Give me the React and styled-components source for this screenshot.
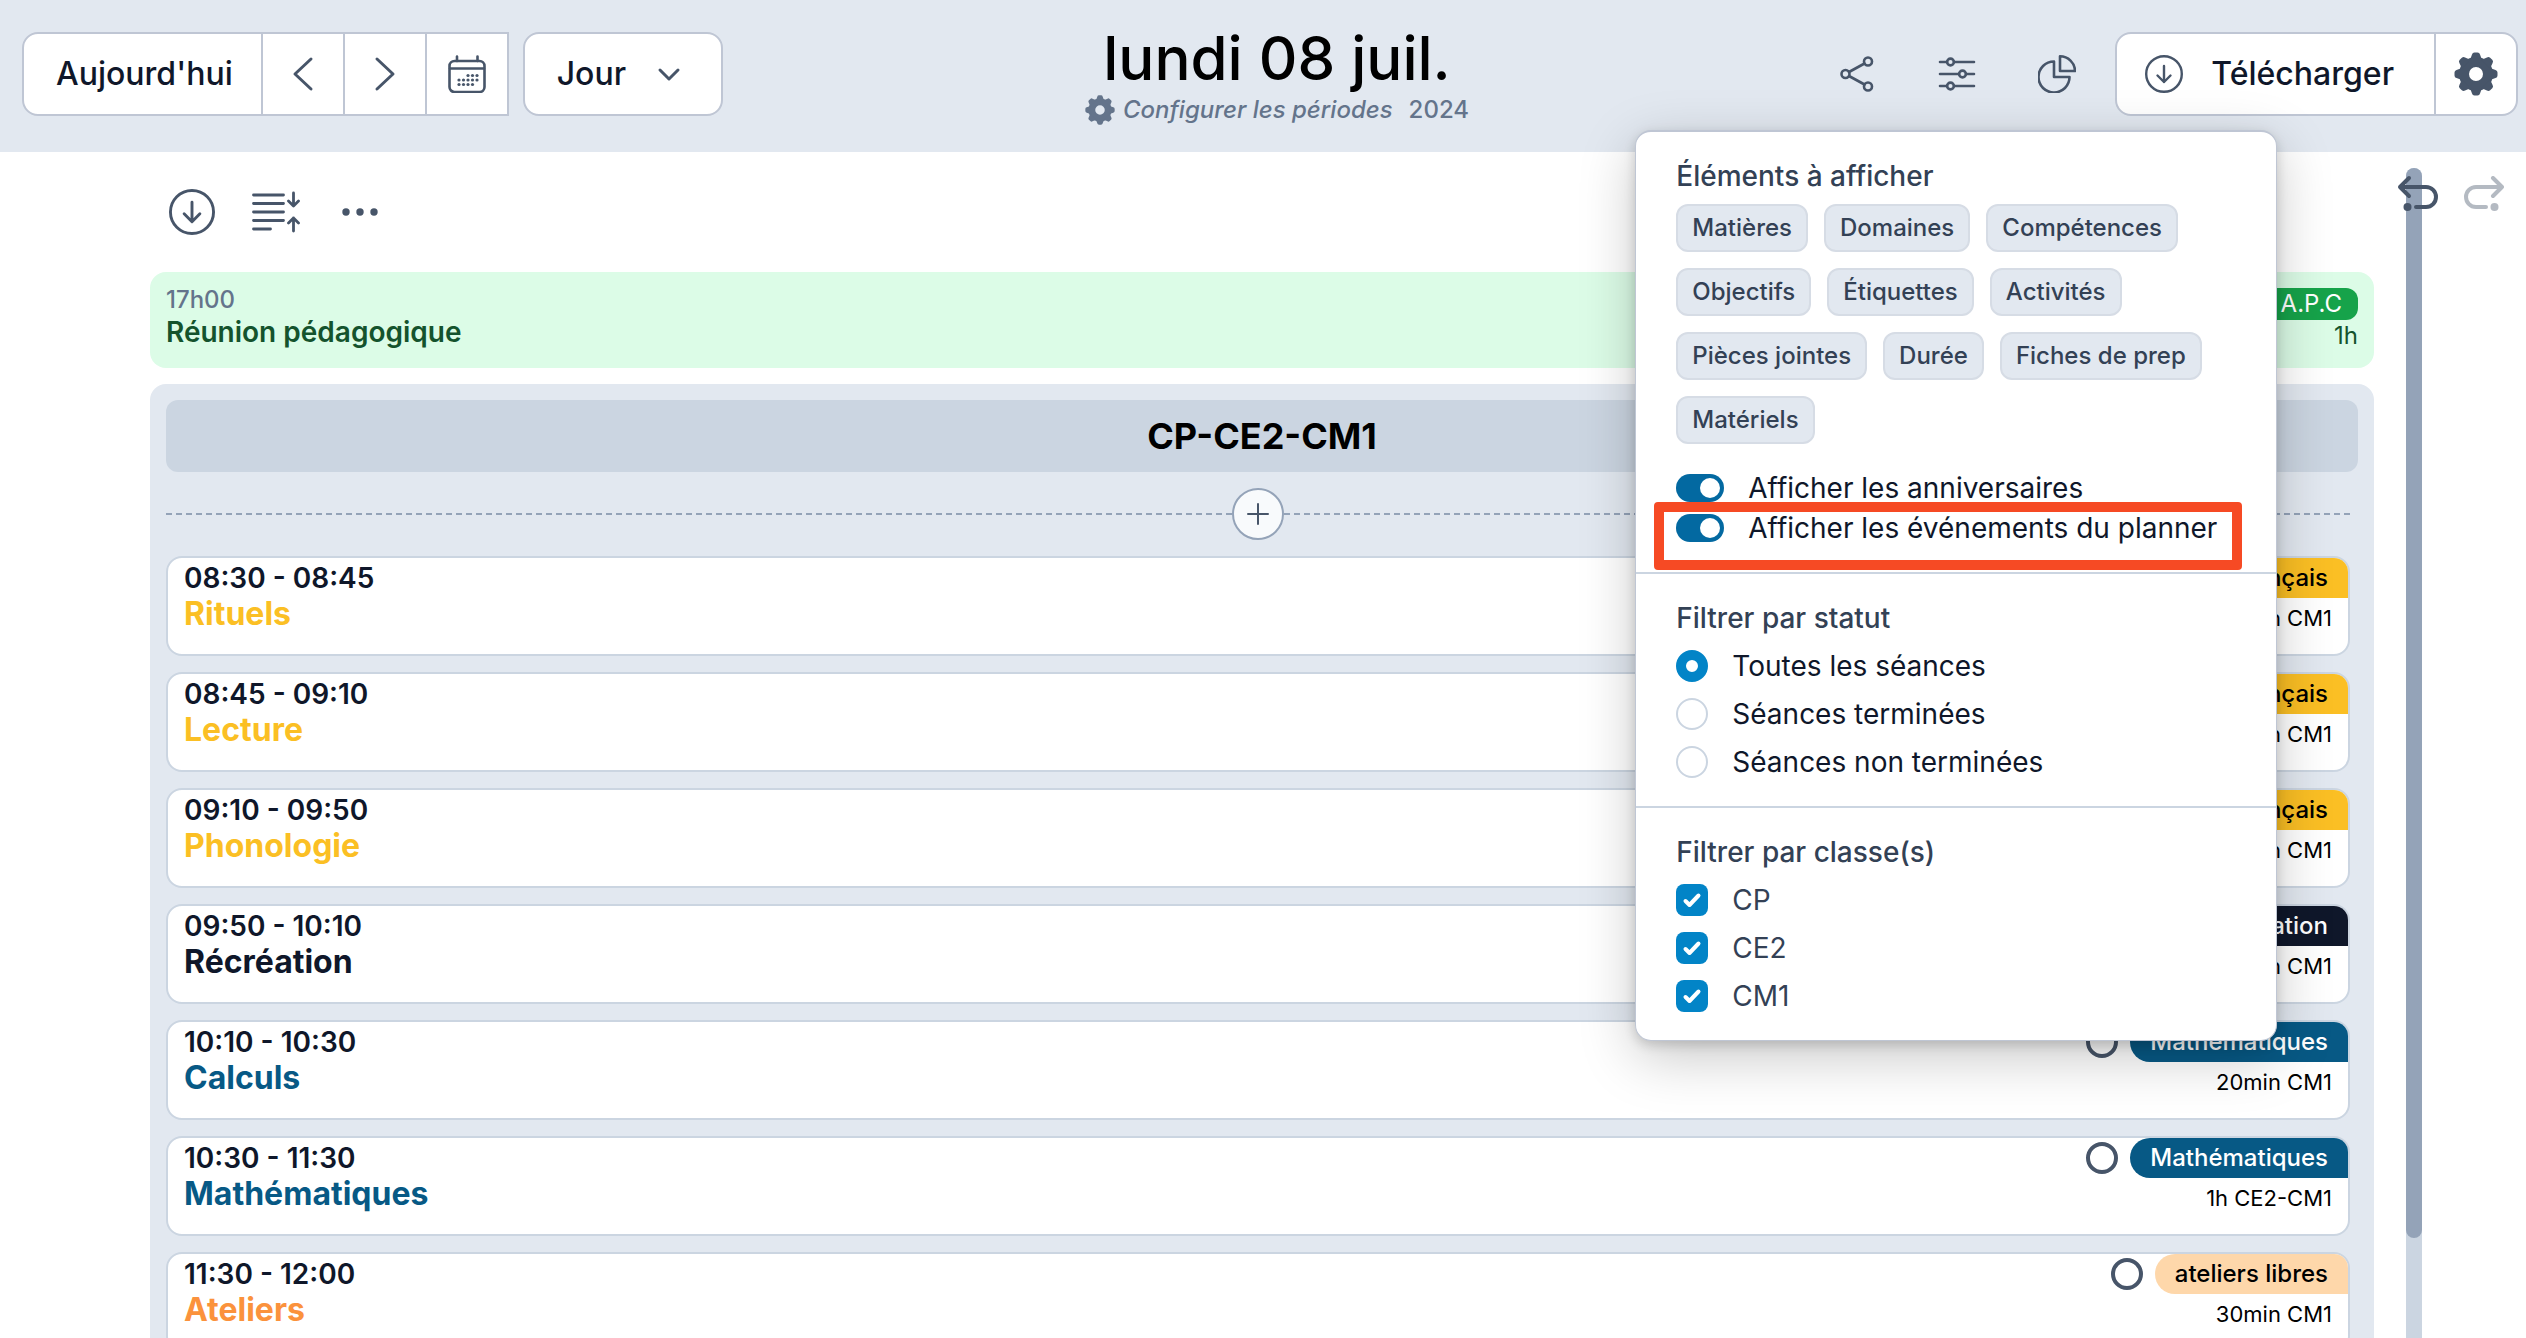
import React, { useState } from 'react'
import styled, { createGlobalStyle } from 'styled-components';

const colors = {
      border: "#bfc6d4",
      line: "#cbd5e1",
      panel: "#e2e8f0",
      icon: "#475569",
      muted: "#64748b",
      heading: "#334155",
      text: "#0f172a",
};

const sessions = [
      { id: 1, time: "08:30 - 08:45", title: "Rituels", color: "#fbbf24", tag: "Français", tagBg: "#fbbf24", tagColor: "#000", meta: "15min CM1" },
      { id: 2, time: "08:45 - 09:10", title: "Lecture", color: "#fbbf24", tag: "Français", tagBg: "#fbbf24", tagColor: "#000", meta: "25min CM1" },
      { id: 3, time: "09:10 - 09:50", title: "Phonologie", color: "#fbbf24", tag: "Français", tagBg: "#fbbf24", tagColor: "#000", meta: "40min CM1" },
      { id: 4, time: "09:50 - 10:10", title: "Récréation", color: "#0f172a", tag: "Récréation", tagBg: "#0f172a", tagColor: "#fff", meta: "20min CM1" },
      { id: 5, time: "10:10 - 10:30", title: "Calculs", color: "#075985", tag: "Mathématiques", tagBg: "#075985", tagColor: "#fff", meta: "20min CM1" },
      { id: 6, time: "10:30 - 11:30", title: "Mathématiques", color: "#075985", tag: "Mathématiques", tagBg: "#075985", tagColor: "#fff", meta: "1h CE2-CM1" },
      { id: 7, time: "11:30 - 12:00", title: "Ateliers", color: "#fb923c", tag: "ateliers libres", tagBg: "#fed7aa", tagColor: "#000", meta: "30min CM1" },
];

const elements = ["Matières", "Domaines", "Compétences", "Objectifs", "Étiquettes", "Activités", "Pièces jointes", "Durée", "Fiches de prep", "Matériels"];
const statuses = ["Toutes les séances", "Séances terminées", "Séances non terminées"];
const classes = ["CP", "CE2", "CM1"];

const GlobalStyle = createGlobalStyle`
* {
      box-sizing: border-box;
}
body {
      margin: 0;
      background: #fff;
      font-family: Inter, "Liberation Sans", sans-serif;
      font-size: 28px;
      line-height: 40px;
      color: ${colors.text};
}
button, select, input {
      margin: 0;
      font: inherit;
      color: inherit;
}
button, select, label {
      cursor: pointer;
}
svg {
      display: block;
      flex: none;
}
`;

const Page = styled.div`
height: 100vh;
display: flex;
flex-direction: column;
overflow: hidden;
`;

const Header = styled.header`
display: flex;
align-items: center;
justify-content: space-between;
padding: 22px 8px 26px 22px;
background: ${colors.panel};
`;

const HeaderGroup = styled.div`
display: flex;
align-items: center;
gap: ${(props) => props.$gap}px;
`;

const ButtonGroup = styled.div`
display: flex;
height: 84px;
background: #fff;
border: 2px solid ${colors.border};
border-radius: ${(props) => props.$open ? "16px 0 0 16px" : "16px"};
`;

const GroupButton = styled.button`
display: flex;
align-items: center;
justify-content: center;
gap: 28px;
min-width: 82px;
padding: ${(props) => props.$padding || "0"};
background: none;
border: 0;
font-size: 32px;
font-weight: 500;
color: ${colors.text};

& + & {
      border-left: 2px solid ${colors.border};
}

svg {
      color: ${colors.icon};
}
`;

const SelectBox = styled.div`
display: grid;
align-items: center;
height: 84px;
background: #fff;
border: 2px solid ${colors.border};
border-radius: 16px;

> * {
      grid-area: 1 / 1;
}

svg {
      justify-self: end;
      margin-right: 40px;
      color: ${colors.icon};
      pointer-events: none;
}
`;

const Select = styled.select`
appearance: none;
height: 100%;
padding: 0 94px 0 32px;
background: none;
border: 0;
font-size: 32px;
font-weight: 500;
`;

const TitleBlock = styled.div`
display: flex;
flex-direction: column;
align-items: center;
`;

const DayTitle = styled.h1`
margin: 0;
font-size: 60px;
font-weight: 500;
line-height: 72px;
color: #000;
`;

const Period = styled.div`
display: flex;
align-items: center;
gap: 16px;
font-size: 24px;
font-weight: 500;
line-height: 32px;
color: ${colors.muted};
`;

const PeriodButton = styled.button`
display: flex;
align-items: center;
gap: 8px;
padding: 0;
background: none;
border: 0;
font-style: italic;
`;

const HeaderIcons = styled.div`
display: flex;
gap: 48px;
`;

const IconButton = styled.button`
display: flex;
align-items: center;
justify-content: center;
min-width: ${(props) => props.$size || 48}px;
height: ${(props) => props.$size || 48}px;
padding: 0;
background: none;
border: 0;
color: ${colors.icon};

&:disabled {
      opacity: 0.4;
}
`;

const Anchor = styled.div`
position: relative;
`;

const Popover = styled.div`
position: absolute;
z-index: 10;
top: 82px;
right: -294px;
width: 642px;
background: #fff;
border: 2px solid ${colors.border};
border-width: 2px 1px 1px;
border-radius: 16px;
box-shadow: 0 16px 56px rgba(0, 0, 0, 0.22), 0 4px 12px rgba(0, 0, 0, 0.16);
`;

const Section = styled.section`
padding: 24px 40px 20px;

& + & {
      border-top: 2px solid ${colors.line};
}
`;

const SectionTitle = styled.h2`
margin: 0 0 4px;
font-size: 28px;
font-weight: 500;
line-height: 40px;
color: ${colors.heading};
`;

const Chips = styled.div`
display: flex;
flex-wrap: wrap;
gap: 16px;
padding: 4px 0 24px;
`;

const Chip = styled.button`
height: 48px;
padding: 0 14px;
background: ${colors.panel};
border: 2px solid #d6dce5;
border-radius: 12px;
font-size: 24px;
font-weight: 500;
line-height: 32px;
color: ${colors.heading};
`;

const ToggleRow = styled.label`
position: relative;
display: flex;
align-items: center;
gap: 24px;
height: 40px;
white-space: nowrap;

&:last-child {
      margin-bottom: 4px;
}

&:last-child::after {
      content: "";
      position: absolute;
      inset: -6px -6px -22px -22px;
      border: 10px solid #f64a24;
      border-radius: 4px;
      pointer-events: none;
}
`;

const Toggle = styled.input`
appearance: none;
display: flex;
width: 48px;
height: 28px;
padding: 4px;
background: ${colors.line};
border-radius: 14px;

&::before {
      content: "";
      width: 20px;
      height: 20px;
      background: #fff;
      border-radius: 50%;
}

&:checked {
      justify-content: flex-end;
      background: #0369a1;
}
`;

const OptionRow = styled.label`
display: flex;
align-items: center;
gap: 24px;
height: 48px;
color: ${(props) => props.$muted ? colors.heading : colors.text};
`;

const Radio = styled.input`
appearance: none;
width: 32px;
height: 32px;
background: #fff;
border: 2px solid ${colors.line};
border-radius: 50%;

&:checked {
      border: 10px solid #0284c7;
}
`;

const CheckBox = styled.span`
display: grid;
color: #fff;

> * {
      grid-area: 1 / 1;
}

svg {
      pointer-events: none;
}
`;

const CheckInput = styled.input`
appearance: none;
width: 32px;
height: 32px;
border: 2px solid ${colors.line};
border-radius: 8px;

&:checked {
      background: #0284c7;
      border: 0;
}
`;

const Body = styled.div`
position: relative;
flex: 1;
min-height: 0;
display: flex;
gap: 32px;
padding: 0 104px 0 150px;
`;

const History = styled.div`
position: absolute;
top: 20px;
right: 20px;
display: flex;
gap: 22px;
`;

const Content = styled.main`
flex: 1;
min-width: 0;
`;

const Scrollbar = styled.div`
width: 16px;
margin-top: 16px;
background: ${colors.line};
border-radius: 8px 8px 0 0;
`;

const Thumb = styled.div`
height: 1070px;
background: #94a3b8;
border-radius: 8px;
`;

const Toolbar = styled.div`
display: flex;
align-items: center;
gap: 36px;
height: 120px;
padding-left: 18px;
`;

const EventCard = styled.article`
display: flex;
justify-content: space-between;
height: 96px;
margin-bottom: 16px;
padding: 12px 16px;
background: #dcfce7;
border-radius: 16px;
font-size: 24px;
line-height: 32px;
color: #14532d;
`;

const EventTime = styled.div`
font-weight: 500;
color: ${colors.muted};
`;

const EventTitle = styled.div`
font-size: 28px;
font-weight: 600;
`;

const EventSide = styled.div`
padding-top: 4px;
text-align: right;
`;

const EventTag = styled.div`
padding: 0 16px;
background: #16a34a;
border-radius: 12px;
color: #fff;
`;

const DayPanel = styled.div`
padding: 16px 16px 0;
background: ${colors.panel};
border-radius: 16px 16px 0 0;
`;

const ClassTitle = styled.h2`
margin: 0;
padding: 8px;
background: ${colors.line};
border-radius: 12px;
font-size: 36px;
font-weight: 700;
line-height: 56px;
text-align: center;
color: #000;
`;

const SessionList = styled.div`
display: flex;
flex-direction: column;
gap: 16px;
padding: 16px 8px 0 0;
`;

const AddRow = styled.div`
display: flex;
align-items: center;
height: 52px;

&::before, &::after {
      content: "";
      flex: 1;
      border-top: 2px dashed #94a3b8;
}
`;

const AddButton = styled.button`
display: flex;
align-items: center;
justify-content: center;
width: 52px;
height: 52px;
padding: 0;
background: #f8fafc;
border: 2px solid #94a3b8;
border-radius: 50%;
color: ${colors.icon};
`;

const SessionCard = styled.article`
display: flex;
flex: none;
justify-content: space-between;
height: 100px;
overflow: hidden;
background: #fff;
border: 2px solid ${colors.line};
border-radius: 16px;
`;

const SessionMain = styled.div`
padding-left: 16px;
`;

const SessionTime = styled.div`
font-weight: 600;
`;

const SessionTitle = styled.div`
font-size: 32px;
font-weight: 700;
line-height: 32px;
color: ${(props) => props.$color};
`;

const SessionSide = styled.div`
text-align: right;
color: #000;
`;

const TagRow = styled.div`
display: flex;
align-items: center;
justify-content: flex-end;
gap: 12px;
`;

const DoneInput = styled.input`
appearance: none;
width: 32px;
height: 32px;
border: 4px solid ${colors.icon};
border-radius: 50%;
`;

const Tag = styled.span`
padding: 0 20px;
background: ${(props) => props.$bg};
border-radius: 20px 0 0 20px;
font-size: 24px;
font-weight: 500;
color: ${(props) => props.$color};
`;

const Meta = styled.div`
padding-right: 16px;
font-size: 22px;
`;

const Icon = ({ w = 38, h = 38, box, stroke = 2, children }) => (
      <svg width={w} height={h} viewBox={box || `0 0 ${w} ${h}`} fill="none" stroke="currentColor" strokeWidth={stroke} strokeLinecap="round" strokeLinejoin="round" aria-hidden="true">
            {children}
      </svg>
);

const GearIcon = ({ size }) => (
      <svg width={size} height={size} viewBox="0 0 44 44" aria-hidden="true">
            <circle cx="22" cy="22" r="12" fill="none" stroke="currentColor" strokeWidth="10" />
            {[0, 45, 90, 135, 180, 225, 270, 315].map(angle => (
                  <path key={angle} d="M16 8 L18 2.5 Q18.5 0.5 20.5 0.5 H23.5 Q25.5 0.5 26 2.5 L28 8 Z" fill="currentColor" transform={`rotate(${angle} 22 22)`} />
            ))}
      </svg>
);

const DownloadIcon = ({ size, stroke }) => (
      <Icon w={size} h={size} box="0 0 38 38" stroke={stroke}>
            <circle cx="19" cy="19" r="17.8" />
            <path d="M19 11 V27 M12.5 20.5 L19 27 L25.5 20.5" />
      </Icon>
);

const CalendarIcon = () => (
      <Icon stroke={2.6}>
            <rect x="1.5" y="6" width="35" height="31" rx="5" />
            <path d="M2 13.5 H36 M9 1.5 V6 M29.5 1.5 V6" />
            <g fill="currentColor" stroke="none">
                  {[[20, 20.5], [24.5, 20.5], [29, 20.5], [11, 25], [15.5, 25], [20, 25], [24.5, 25], [29, 25], [11, 29.5], [15.5, 29.5], [20, 29.5], [24.5, 29.5]].map(([x, y]) => (
                        <circle key={`${x}-${y}`} cx={x} cy={y} r="1.6" />
                  ))}
            </g>
      </Icon>
);

const UndoShape = () => (
      <>
            <path d="M12 3 L3 12 L12 21 M3 12 H29 A9.5 9.5 0 0 1 29 32 H19" />
            <circle cx="10.5" cy="32" r="4" fill="currentColor" stroke="none" />
      </>
);

const FilterPopover = () => {
      const [birthdays, setBirthdays] = useState(true);
      const [events, setEvents] = useState(true);
      const [status, setStatus] = useState(0);
      const [checked, setChecked] = useState(classes);

      const toggleClass = (name) => {
            setChecked(checked.includes(name) ? checked.filter(c => c !== name) : [...checked, name]);
      };

      return (
            <Popover>
                  <Section>
                        <SectionTitle>Éléments à afficher</SectionTitle>
                        <Chips>
                              {elements.map(name => <Chip key={name}>{name}</Chip>)}
                        </Chips>
                        <ToggleRow>
                              <Toggle type="checkbox" checked={birthdays} onChange={() => setBirthdays(!birthdays)} />
                              Afficher les anniversaires
                        </ToggleRow>
                        <ToggleRow>
                              <Toggle type="checkbox" checked={events} onChange={() => setEvents(!events)} />
                              Afficher les événements du planner
                        </ToggleRow>
                  </Section>
                  <Section>
                        <SectionTitle>Filtrer par statut</SectionTitle>
                        {statuses.map((label, index) => (
                              <OptionRow key={label}>
                                    <Radio type="radio" name="status" checked={status === index} onChange={() => setStatus(index)} />
                                    {label}
                              </OptionRow>
                        ))}
                  </Section>
                  <Section>
                        <SectionTitle>Filtrer par classe(s)</SectionTitle>
                        {classes.map(name => (
                              <OptionRow key={name} $muted>
                                    <CheckBox>
                                          <CheckInput type="checkbox" checked={checked.includes(name)} onChange={() => toggleClass(name)} />
                                          <Icon w={32} h={32} stroke={4}>
                                                <path d="M9.5 17 L13.5 21 L22.5 11.5" />
                                          </Icon>
                                    </CheckBox>
                                    {name}
                              </OptionRow>
                        ))}
                  </Section>
            </Popover>
      )
}

const App = () => {
      const [view, setView] = useState("Jour");
      const [open, setOpen] = useState(true);

      return (
            <Page>
                  <GlobalStyle />
                  <Header>
                        <HeaderGroup $gap={14}>
                              <ButtonGroup $open>
                                    <GroupButton $padding="0 28px 0 32px">Aujourd'hui</GroupButton>
                                    <GroupButton aria-label="Jour précédent">
                                          <Icon stroke={3}><path d="M27 4 L11 19 L27 34" /></Icon>
                                    </GroupButton>
                                    <GroupButton aria-label="Jour suivant">
                                          <Icon stroke={3}><path d="M11 4 L27 19 L11 34" /></Icon>
                                    </GroupButton>
                                    <GroupButton aria-label="Calendrier"><CalendarIcon /></GroupButton>
                              </ButtonGroup>
                              <SelectBox>
                                    <Select aria-label="Vue" value={view} onChange={(e) => setView(e.target.value)}>
                                          <option>Jour</option>
                                    </Select>
                                    <Icon w={24} h={24} stroke={3}><path d="M3 8 L12 17 L21 8" /></Icon>
                              </SelectBox>
                        </HeaderGroup>
                        <TitleBlock>
                              <DayTitle>lundi 08 juil.</DayTitle>
                              <Period>
                                    <PeriodButton>
                                          <GearIcon size={30} />
                                          Configurer les périodes
                                    </PeriodButton>
                                    <span>2024</span>
                              </Period>
                        </TitleBlock>
                        <HeaderGroup $gap={32}>
                              <HeaderIcons>
                                    <IconButton $size={52} aria-label="Partager">
                                          <Icon stroke={2.6}>
                                                <circle cx="7.5" cy="19" r="4" />
                                                <circle cx="30" cy="6.5" r="4" />
                                                <circle cx="30" cy="31.5" r="4" />
                                                <path d="M11 17 L26.5 8.5 M11 21 L26.5 29.5" />
                                          </Icon>
                                    </IconButton>
                                    <Anchor>
                                          <IconButton $size={52} aria-label="Filtres" onClick={() => setOpen(!open)}>
                                                <Icon stroke={2.6}>
                                                      <path d="M2 7 H9 M16 7 H36 M2 19 H21 M28 19 H36 M2 31 H9 M16 31 H36" />
                                                      <circle cx="12.5" cy="7" r="3.4" />
                                                      <circle cx="24.5" cy="19" r="3.4" />
                                                      <circle cx="12.5" cy="31" r="3.4" />
                                                </Icon>
                                          </IconButton>
                                          {open && <FilterPopover />}
                                    </Anchor>
                                    <IconButton $size={52} aria-label="Statistiques">
                                          <Icon stroke={2.6}>
                                                <path d="M16 6.5 A15.5 15.5 0 1 0 31.5 22 H16 Z" />
                                                <path d="M22 16 H37 A15 15 0 0 0 22 1.3 Z" />
                                          </Icon>
                                    </IconButton>
                              </HeaderIcons>
                              <ButtonGroup>
                                    <GroupButton $padding="0 40px 0 28px">
                                          <DownloadIcon size={38} stroke={2.4} />
                                          Télécharger
                                    </GroupButton>
                                    <GroupButton aria-label="Paramètres"><GearIcon size={44} /></GroupButton>
                              </ButtonGroup>
                        </HeaderGroup>
                  </Header>
                  <Body>
                        <Content>
                              <Toolbar>
                                    <IconButton aria-label="Télécharger la journée"><DownloadIcon size={46} stroke={2.4} /></IconButton>
                                    <IconButton aria-label="Réduire">
                                          <Icon w={48} h={48} stroke={2.8}>
                                                <path d="M1.5 7 H31.5 M1.5 15.5 H31.5 M1.5 24 H31.5 M1.5 32.5 H31.5 M1.5 41 H18.5" />
                                                <path d="M41.5 5 V18 M36.5 13 L41.5 18 L46.5 13 M41.5 43 V30 M36.5 35 L41.5 30 L46.5 35" />
                                          </Icon>
                                    </IconButton>
                                    <IconButton aria-label="Plus d'options">
                                          <svg width="48" height="48" viewBox="0 0 48 48" fill="currentColor" aria-hidden="true">
                                                <circle cx="10" cy="24" r="3.7" />
                                                <circle cx="24" cy="24" r="3.7" />
                                                <circle cx="38" cy="24" r="3.7" />
                                          </svg>
                                    </IconButton>
                              </Toolbar>
                              <EventCard>
                                    <div>
                                          <EventTime>17h00</EventTime>
                                          <EventTitle>Réunion pédagogique</EventTitle>
                                    </div>
                                    <EventSide>
                                          <EventTag>A.P.C</EventTag>
                                          <div>1h</div>
                                    </EventSide>
                              </EventCard>
                              <DayPanel>
                                    <ClassTitle>CP-CE2-CM1</ClassTitle>
                                    <SessionList>
                                          <AddRow>
                                                <AddButton aria-label="Ajouter une séance">
                                                      <Icon w={22} h={22}><path d="M11 1 V21 M1 11 H21" /></Icon>
                                                </AddButton>
                                          </AddRow>
                                          {sessions.map(session => (
                                                <SessionCard key={session.id}>
                                                      <SessionMain>
                                                            <SessionTime>{session.time}</SessionTime>
                                                            <SessionTitle $color={session.color}>{session.title}</SessionTitle>
                                                      </SessionMain>
                                                      <SessionSide>
                                                            <TagRow>
                                                                  <DoneInput type="checkbox" aria-label={`${session.title} terminée`} />
                                                                  <Tag $bg={session.tagBg} $color={session.tagColor}>{session.tag}</Tag>
                                                            </TagRow>
                                                            <Meta>{session.meta}</Meta>
                                                      </SessionSide>
                                                </SessionCard>
                                          ))}
                                    </SessionList>
                              </DayPanel>
                        </Content>
                        <Scrollbar>
                              <Thumb />
                        </Scrollbar>
                        <History>
                              <IconButton $size={44} aria-label="Annuler">
                                    <Icon w={42} h={38} stroke={4}><UndoShape /></Icon>
                              </IconButton>
                              <IconButton $size={44} aria-label="Rétablir" disabled>
                                    <Icon w={42} h={38} stroke={4}>
                                          <g transform="matrix(-1 0 0 1 42 0)"><UndoShape /></g>
                                    </Icon>
                              </IconButton>
                        </History>
                  </Body>
            </Page>
      )
}

export default App
